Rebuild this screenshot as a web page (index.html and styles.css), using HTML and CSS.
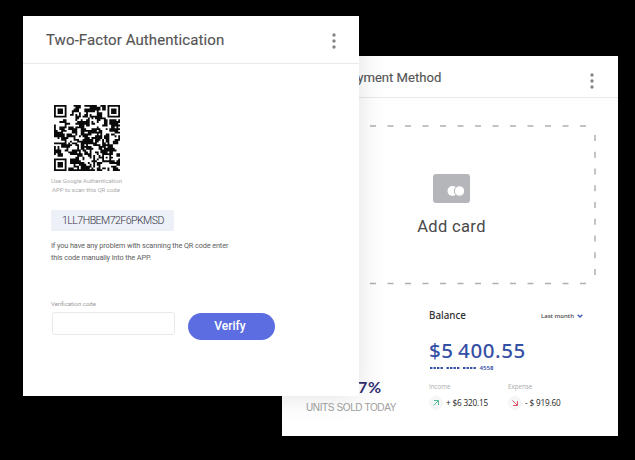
FILE: index.html
```html
<!DOCTYPE html>
<html lang="en">
<head>
<meta charset="utf-8">
<title>Two-Factor Authentication</title>
<link rel="stylesheet" href="styles.css">
</head>
<body>
<main class="desktop">
  <section class="window payment">
    <header class="head">
      <h2 class="title">Payment Method</h2>
      <svg class="kebab" width="4" height="16" viewBox="0 0 4 16"><circle cx="2" cy="2" r="1.7"/><circle cx="2" cy="8" r="1.7"/><circle cx="2" cy="14" r="1.7"/></svg>
    </header>
    <div class="add">
      <svg class="dashes" width="286" height="160" viewBox="0 0 286 160"><path d="M60 1H279" stroke-dasharray="6 11.5"/><path d="M60 158.500H279" stroke-dasharray="6 11.5"/><path d="M285 10V152" stroke-dasharray="6 10.75"/></svg>
      <div class="add-body">
        <svg width="37" height="29" viewBox="0 0 37 29"><rect width="37" height="29" rx="3" fill="#b4b6b9"/><circle cx="19.5" cy="17" r="5" fill="#fff"/><circle cx="26.5" cy="17" r="5.2" fill="#fff" stroke="#b4b6b9" stroke-width="1"/></svg>
        <span class="add-label">Add card</span>
      </div>
    </div>
    <div class="stats">
      <div class="units">
        <strong class="percent">27%</strong>
        <span class="units-label">UNITS SOLD TODAY</span>
      </div>
      <div class="balance">
        <div class="balance-head">
          <span class="balance-title">Balance</span>
          <span class="period">Last month</span>
          <svg width="6" height="4" viewBox="0 0 6 4"><path d="M.7.7 3 3 5.300.7" fill="none" stroke="#4159b5" stroke-width="1.300"/></svg>
        </div>
        <div class="amount">$5 400.55</div>
        <div class="number"><svg width="48" height="4" viewBox="0 0 48 4"><path d="M1 2H14.300M17.500 2H31M34 2H47.500"/></svg><span class="last4">4558</span></div>
        <div class="flows">
          <div class="flow">
            <span class="flow-label">Income</span>
            <div class="flow-row"><svg class="badge up" width="14" height="14" viewBox="0 0 14 14"><circle cx="7" cy="7" r="6.500"/><path d="M4.500 9.500 9.300 4.700M5 4.500H9.500V9"/></svg><span class="money">+ $6 320.15</span></div>
          </div>
          <div class="flow">
            <span class="flow-label">Expense</span>
            <div class="flow-row"><svg class="badge down" width="14" height="14" viewBox="0 0 14 14"><circle cx="7" cy="7" r="6.500"/><path d="M4.500 4.500 9.300 9.300M5 9.500H9.500V5"/></svg><span class="money">- $ 919.60</span></div>
          </div>
        </div>
      </div>
    </div>
  </section>

  <section class="window auth">
    <header class="head">
      <h1 class="title">Two-Factor Authentication</h1>
      <svg class="kebab" width="4" height="16" viewBox="0 0 4 16"><circle cx="2" cy="2" r="1.7"/><circle cx="2" cy="8" r="1.7"/><circle cx="2" cy="14" r="1.7"/></svg>
    </header>
    <div class="auth-body">
      <svg class="qr" id="qr" width="66" height="66" viewBox="0 0 37 37"></svg>
      <p class="hint">Use Google Authentication<br>APP to scan this QR code</p>
      <div class="secret"><span>1LL7HBEM72F6PKMSD</span></div>
      <p class="help">If you have any problem with scanning the QR code enter<br>this code manually into the APP.</p>
      <form class="form">
        <div class="field"><label class="field-label" for="code">Verification code</label><input class="input" id="code"></div>
        <button class="verify" type="button">Verify</button>
      </form>
    </div>
  </section>
</main>
<script src="qr.js"></script>
</body>
</html>
```
FILE: styles.css
```css
* { box-sizing: border-box; }
body { margin: 0; background: #000; font-family: Roboto, sans-serif; color: #555; }
h1, h2, p { margin: 0; font-weight: 400; }
svg { display: block; flex: none; }
span, .amount, .percent { white-space: nowrap; }
.desktop { position: relative; width: 635px; height: 460px; overflow: hidden; }
.window { position: absolute; width: 336px; height: 380px; background: #fff; }
.payment { left: 282px; top: 56px; overflow: hidden; }
.auth { left: 23px; top: 16px; box-shadow: 0 0 26px rgba(0, 0, 0, .12); }
.head { display: flex; align-items: center; justify-content: space-between; border-bottom: 1px solid #e9e9e9; }
.auth .head { height: 48px; padding: 1px 23px 0 23px; }
.payment .head { height: 42px; padding: 1px 24px 0 60px; }
.title { -webkit-text-stroke: .15px #555; }
.auth .title { font-size: 15px; letter-spacing: .09px; }
.payment .title { font-size: 13.1px; }
.kebab { fill: #858585; margin-top: 2px; }
.payment .kebab { margin-top: 7px; }
.add { margin: 27px 0 0 28px; width: 286px; height: 160px; display: grid; }
.dashes, .add-body { grid-area: 1 / 1; }
.dashes path { stroke: #b0b0b0; stroke-width: 1.5; fill: none; }
.add-body { display: flex; flex-direction: column; align-items: center; padding: 49px 4px 0 0; }
.add-label { font: 16.5px/20px Roboto, sans-serif; letter-spacing: .35px; color: #484848; margin: 14px 0 0 1px; }
.stats { display: flex; padding-top: 25px; }
.units { width: 147px; padding: 67px 0 0 24px; display: flex; flex-direction: column; }
.percent { font: 700 16px/20px Lato, sans-serif; letter-spacing: .7px; color: #302f73; padding-left: 42px; }
.units-label { font: 10px/12px "Liberation Sans", sans-serif; letter-spacing: -.38px; color: #a0a0a0; margin-top: 5px; }
.balance { width: 160px; }
.balance-head { display: flex; align-items: center; height: 12px; }
.balance-title { font: 500 9.8px/12px "Noto Sans", sans-serif; color: #333; flex: 1; }
.period { font: 500 6.1px/10px "Noto Sans", sans-serif; color: #444; margin-right: 3px; }
.balance-head svg { margin-right: 6px; }
.amount { font: 500 20.5px/24px "Noto Sans", sans-serif; letter-spacing: .6px; word-spacing: -1.5px; color: #3450a5; margin-top: 16px; }
.number { display: flex; align-items: center; height: 8px; margin-top: 2px; }
.number path { stroke: #3450a5; stroke-width: 2.2; stroke-dasharray: 2.4 1.1; }
.last4 { font: 600 6.1px/8px "Noto Sans", sans-serif; color: #3450a5; margin-left: 2.5px; }
.flows { display: flex; margin-top: 11px; }
.flow { width: 79px; }
.flow-label { display: block; font: 6.2px/8px "Open Sans", sans-serif; color: #aaa; }
.flow-row { display: flex; align-items: center; margin-top: 5px; gap: 3px; }
.badge circle { fill: #f7f7f7; stroke: #eee; stroke-width: .5; }
.badge path { fill: none; stroke: #55bb98; stroke-width: 1; }
.badge.down path { stroke: #df5267; }
.money { font: 500 8.2px/12px "Open Sans", sans-serif; letter-spacing: -.16px; color: #222; }
.auth-body { padding: 41px 0 0 28px; }
.qr { margin-left: 3px; }
.hint { width: 70px; margin-top: 5px; text-align: center; font-size: 6px; line-height: 9px; color: #aaa; white-space: nowrap; }
.secret { margin-top: 16px; width: 123px; height: 21px; background: #edf0f7; display: flex; align-items: center; padding-left: 11px; font-size: 10.6px; letter-spacing: -.56px; font-weight: 300; color: #334; }
.help { margin-top: 9px; font-size: 7.3px; letter-spacing: -.11px; line-height: 12px; color: #606060; }
.form { display: flex; margin-top: 36px; }
.field { width: 137px; }
.field-label { display: block; font-size: 6px; line-height: 8px; color: #999; }
.input { display: block; margin: 4px 0 0 1px; width: 123px; height: 23px; border: 1px solid #e9e9ec; border-radius: 3px; background: #fff; }
.verify { margin-top: 13px; width: 87px; height: 27px; border: 0; border-radius: 14px; background: #5b6de0; color: #fff; font: 500 12px Roboto, sans-serif; padding: 0 3px 1px 0; }
```
FILE: qr.js
```js
const size = 37;
const finder = (x, y) => {
  const d = Math.max(Math.abs(x - 3), Math.abs(y - 3));
  return d === 3 || d <= 1;
};
let seed = 9731;
const random = () => (seed = (seed * 16807) % 2147483647) / 2147483647;
let path = "";
const rows = [];
for (let y = 0; y < size; y++) {
  rows.push([]);
  for (let x = 0; x < size; x++) {
    const r = random();
    let on = random() < 0.52;
    if (x && r < 0.28) on = rows[y][x - 1];
    else if (y && r < 0.5) on = rows[y - 1][x];
    rows[y].push(on);
    if (x < 8 && y < 8) on = x < 7 && y < 7 && finder(x, y);
    if (x > 28 && y < 8) on = x > 29 && y < 7 && finder(x - 30, y);
    if (x < 8 && y > 28) on = x < 7 && y > 29 && finder(x, y - 30);
    const d = Math.max(Math.abs(x - 29), Math.abs(y - 29));
    if (d <= 2) on = d !== 1;
    if (on) path += `M${x} ${y}h1.03v1.03h-1.03z`;
  }
}
document.getElementById("qr").innerHTML = `<path d="${path}" fill="#0a0a0a"/>`;
```
